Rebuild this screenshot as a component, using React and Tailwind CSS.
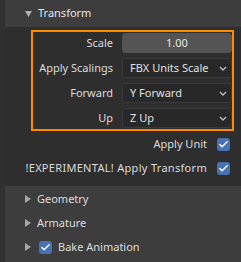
import { Check } from "lucide-react";

const FIELDS = [
  { label: "Apply Scalings", value: "FBX Units Scale" },
  { label: "Forward", value: "Y Forward" },
  { label: "Up", value: "Z Up" },
];

function TriRight() {
  return (
    <svg width="6" height="8" viewBox="0 0 6 8" className="shrink-0">
      <path d="M0 0 L6 4 L0 8 Z" fill="#a6a6a6" />
    </svg>
  );
}

function TriDown() {
  return (
    <svg width="7" height="6" viewBox="0 0 7 6" className="shrink-0">
      <path d="M0 0 L7 0 L3.5 6 Z" fill="#b0b0b0" />
    </svg>
  );
}

function CheckBox() {
  return (
    <span className="flex h-[13px] w-[13px] items-center justify-center rounded-[3px] bg-[#4772b3]">
      <Check size={11} strokeWidth={3} color="#ffffff" />
    </span>
  );
}

function Chevron() {
  return (
    <svg width="8" height="5" viewBox="0 0 8 5" className="shrink-0">
      <path d="M1 1 L4 4 L7 1" fill="none" stroke="#bdbdbd" strokeWidth="1.4" />
    </svg>
  );
}

export default function App() {
  return (
    <div
      className="flex h-[262px] w-[241px] overflow-hidden whitespace-nowrap bg-[#3d3d3d] text-[11px] text-[#dcdcdc]"
      style={{ fontFamily: '"Noto Sans", sans-serif' }}
    >
      <div className="w-[5px] shrink-0 bg-[#303030]" />
      <div className="flex flex-1 flex-col">
        {/* Transform header */}
        <div className="flex h-[27px] items-center gap-[6px] pl-[20px]">
          <TriDown />
          <span className="text-[#e6e6e6]">Transform</span>
        </div>

        {/* Transform body */}
        <div className="flex h-[159px] flex-col bg-[#2e2e2e] pt-[3px]">
          <div className="ml-[26px] flex w-[203px] flex-col gap-[5px] border-2 border-[#ff8a00] py-[1px]">
            <div className="flex h-[20px] items-center">
              <span className="w-[80px] text-right">Scale</span>
              <div className="ml-[9px] flex h-full w-[110px] items-center justify-center rounded-[4px] bg-[#545454] text-[#e6e6e6]">
                1.00
              </div>
            </div>
            {FIELDS.map((f) => (
              <div key={f.label} className="flex h-[20px] items-center">
                <span className="w-[80px] text-right">{f.label}</span>
                <div className="ml-[9px] flex h-full w-[110px] items-center justify-between rounded-[4px] border border-[#3a3a3a] bg-[#282828] pl-[7px] pr-[4px] text-[#e0e0e0]">
                  <span>{f.value}</span>
                  <Chevron />
                </div>
              </div>
            ))}
          </div>

          <div className="mt-[1px] flex h-[24px] items-center justify-end gap-[10px] pr-[11px]">
            <span>Apply Unit</span>
            <CheckBox />
          </div>
          <div className="flex h-[24px] items-center justify-end gap-[10px] pr-[11px]">
            <span className="tracking-[0.3px]">!EXPERIMENTAL! Apply Transform</span>
            <CheckBox />
          </div>
        </div>

        {/* Collapsed panels */}
        <div className="flex flex-col pt-[1px]">
          <div className="flex h-[24px] items-center gap-[6px] pl-[20px]">
            <TriRight />
            <span>Geometry</span>
          </div>
          <div className="flex h-[24px] items-center gap-[6px] pl-[20px]">
            <TriRight />
            <span>Armature</span>
          </div>
          <div className="flex h-[24px] items-center pl-[20px]">
            <TriRight />
            <span className="ml-[8px]">
              <CheckBox />
            </span>
            <span className="ml-[6px]">Bake Animation</span>
          </div>
        </div>
      </div>
    </div>
  );
}
